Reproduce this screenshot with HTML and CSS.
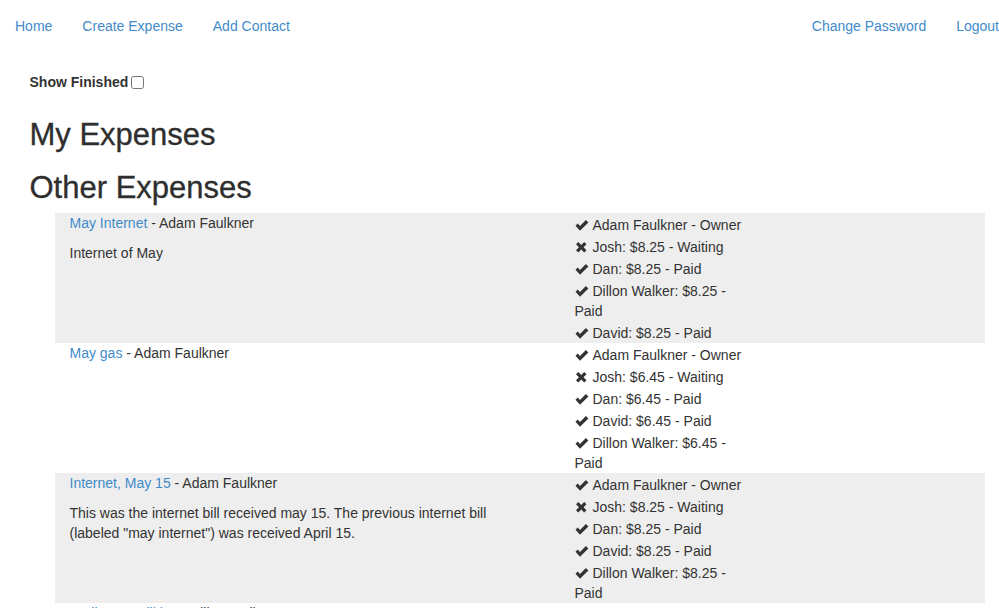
FILE: index.html
```html
<!DOCTYPE html>
<html lang="en">
<head>
<meta charset="utf-8">
<title>Expenses</title>
<link rel="stylesheet" href="styles.css">
</head>
<body>
<nav class="navbar">
  <ul class="nav nav-left">
    <li><a href="#">Home</a></li>
    <li><a href="#">Create Expense</a></li>
    <li><a href="#">Add Contact</a></li>
  </ul>
  <ul class="nav nav-right">
    <li><a href="#">Change Password</a></li>
    <li><a href="#">Logout</a></li>
  </ul>
</nav>

<main class="container">
  <form class="filter">
    <label class="filter-label">Show Finished <input type="checkbox" class="filter-check"></label>
  </form>

  <h2 class="section-title">My Expenses</h2>
  <h2 class="section-title">Other Expenses</h2>

  <ul class="expenses">
    <li class="expense shaded">
      <div class="col-main">
        <div class="expense-title"><a href="#">May Internet</a> - Adam Faulkner</div>
        <p class="expense-desc">Internet of May</p>
      </div>
      <div class="col-people">
        <ul class="people">
          <li><span class="icon ok"><svg viewBox="0 0 14 11"><path d="M0.5 5.8 L2.7 3.6 L5 5.9 L10.9 0 L13.4 2.5 L5 10.7 Z"/></svg></span>Adam Faulkner - Owner</li>
          <li><span class="icon no"><svg viewBox="0 0 14 11"><path d="M1 2.3 L3.3 0 L6.25 2.95 L9.2 0 L11.5 2.3 L8.55 5.25 L11.5 8.2 L9.2 10.5 L6.25 7.55 L3.3 10.5 L1 8.2 L3.95 5.25 Z"/></svg></span>Josh: $8.25 - Waiting</li>
          <li><span class="icon ok"><svg viewBox="0 0 14 11"><path d="M0.5 5.8 L2.7 3.6 L5 5.9 L10.9 0 L13.4 2.5 L5 10.7 Z"/></svg></span>Dan: $8.25 - Paid</li>
          <li><span class="icon ok"><svg viewBox="0 0 14 11"><path d="M0.5 5.8 L2.7 3.6 L5 5.9 L10.9 0 L13.4 2.5 L5 10.7 Z"/></svg></span>Dillon Walker: $8.25 - Paid</li>
          <li><span class="icon ok"><svg viewBox="0 0 14 11"><path d="M0.5 5.8 L2.7 3.6 L5 5.9 L10.9 0 L13.4 2.5 L5 10.7 Z"/></svg></span>David: $8.25 - Paid</li>
        </ul>
      </div>
    </li>

    <li class="expense">
      <div class="col-main">
        <div class="expense-title"><a href="#">May gas</a> - Adam Faulkner</div>
      </div>
      <div class="col-people">
        <ul class="people">
          <li><span class="icon ok"><svg viewBox="0 0 14 11"><path d="M0.5 5.8 L2.7 3.6 L5 5.9 L10.9 0 L13.4 2.5 L5 10.7 Z"/></svg></span>Adam Faulkner - Owner</li>
          <li><span class="icon no"><svg viewBox="0 0 14 11"><path d="M1 2.3 L3.3 0 L6.25 2.95 L9.2 0 L11.5 2.3 L8.55 5.25 L11.5 8.2 L9.2 10.5 L6.25 7.55 L3.3 10.5 L1 8.2 L3.95 5.25 Z"/></svg></span>Josh: $6.45 - Waiting</li>
          <li><span class="icon ok"><svg viewBox="0 0 14 11"><path d="M0.5 5.8 L2.7 3.6 L5 5.9 L10.9 0 L13.4 2.5 L5 10.7 Z"/></svg></span>Dan: $6.45 - Paid</li>
          <li><span class="icon ok"><svg viewBox="0 0 14 11"><path d="M0.5 5.8 L2.7 3.6 L5 5.9 L10.9 0 L13.4 2.5 L5 10.7 Z"/></svg></span>David: $6.45 - Paid</li>
          <li><span class="icon ok"><svg viewBox="0 0 14 11"><path d="M0.5 5.8 L2.7 3.6 L5 5.9 L10.9 0 L13.4 2.5 L5 10.7 Z"/></svg></span>Dillon Walker: $6.45 - Paid</li>
        </ul>
      </div>
    </li>

    <li class="expense shaded">
      <div class="col-main">
        <div class="expense-title"><a href="#">Internet, May 15</a> - Adam Faulkner</div>
        <p class="expense-desc">This was the internet bill received may 15. The previous internet bill (labeled "may internet") was received April 15.</p>
      </div>
      <div class="col-people">
        <ul class="people">
          <li><span class="icon ok"><svg viewBox="0 0 14 11"><path d="M0.5 5.8 L2.7 3.6 L5 5.9 L10.9 0 L13.4 2.5 L5 10.7 Z"/></svg></span>Adam Faulkner - Owner</li>
          <li><span class="icon no"><svg viewBox="0 0 14 11"><path d="M1 2.3 L3.3 0 L6.25 2.95 L9.2 0 L11.5 2.3 L8.55 5.25 L11.5 8.2 L9.2 10.5 L6.25 7.55 L3.3 10.5 L1 8.2 L3.95 5.25 Z"/></svg></span>Josh: $8.25 - Waiting</li>
          <li><span class="icon ok"><svg viewBox="0 0 14 11"><path d="M0.5 5.8 L2.7 3.6 L5 5.9 L10.9 0 L13.4 2.5 L5 10.7 Z"/></svg></span>Dan: $8.25 - Paid</li>
          <li><span class="icon ok"><svg viewBox="0 0 14 11"><path d="M0.5 5.8 L2.7 3.6 L5 5.9 L10.9 0 L13.4 2.5 L5 10.7 Z"/></svg></span>David: $8.25 - Paid</li>
          <li><span class="icon ok"><svg viewBox="0 0 14 11"><path d="M0.5 5.8 L2.7 3.6 L5 5.9 L10.9 0 L13.4 2.5 L5 10.7 Z"/></svg></span>Dillon Walker: $8.25 - Paid</li>
        </ul>
      </div>
    </li>

    <li class="expense">
      <div class="col-main">
        <div class="expense-title"><a href="#">April-May Utilities</a> - Dillon Walker</div>
      </div>
      <div class="col-people">
        <ul class="people">
          <li><span class="icon ok"><svg viewBox="0 0 14 11"><path d="M0.5 5.8 L2.7 3.6 L5 5.9 L10.9 0 L13.4 2.5 L5 10.7 Z"/></svg></span>Dillon Walker - Owner</li>
        </ul>
      </div>
    </li>
  </ul>
</main>
</body>
</html>
```

FILE: styles.css
```css
* { box-sizing: border-box; }

html, body {
  margin: 0;
  padding: 0;
  overflow-x: hidden;
}

body {
  font-family: "Liberation Sans", Arial, Helvetica, sans-serif;
  font-size: 14px;
  line-height: 20px;
  color: #333333;
  background: #ffffff;
}

a {
  color: #428bca;
  text-decoration: none;
}

/* Navbar */
.navbar {
  display: flex;
  justify-content: space-between;
  height: 50px;
  margin-bottom: 22px;
}

.nav {
  list-style: none;
  margin: 0;
  padding: 0;
  display: flex;
  gap: 30px;
}

.nav-left { padding-left: 15px; }

.nav a {
  display: block;
  padding-top: 16px;
  line-height: 20px;
}

/* Page container */
.container {
  width: 940px;
  margin: 0 auto;
}

.filter {
  margin: 0;
  height: 20px;
}

.filter-label {
  font-weight: bold;
  display: inline-flex;
  align-items: center;
}

.filter-check {
  width: 13px;
  height: 13px;
  margin: 1px 0 0 3px;
}

.section-title {
  font-size: 31px;
  font-weight: normal;
  line-height: 33px;
  margin: 26px 0 9px;
  color: #2e2e2e;
  -webkit-text-stroke: 0.3px #2e2e2e;
}

.section-title + .section-title {
  margin-top: 20px;
}

/* Expense list */
.expenses {
  list-style: none;
  margin: 0;
  padding: 0 0 0 40px;
}

.expense {
  display: flex;
  margin: 0 -15px;
}

.expense.shaded {
  background: #eeeeee;
}

.col-main {
  width: 465px;
  flex: none;
  padding: 0 15px;
}

.col-people {
  width: 247px;
  flex: none;
  padding: 0 15px;
}

.expense-title {
  line-height: 20px;
}

.expense-desc {
  margin: 10px 0;
}

.people {
  list-style: none;
  margin: 0;
  padding: 0 0 0 40px;
}

.people li {
  margin-top: 2px;
  line-height: 20px;
}

.icon {
  display: inline-block;
  width: 14px;
  height: 11px;
  margin-right: 4px;
  vertical-align: -1px;
}

.icon svg {
  display: block;
  width: 14px;
  height: 11px;
  fill: #333333;
}
```
